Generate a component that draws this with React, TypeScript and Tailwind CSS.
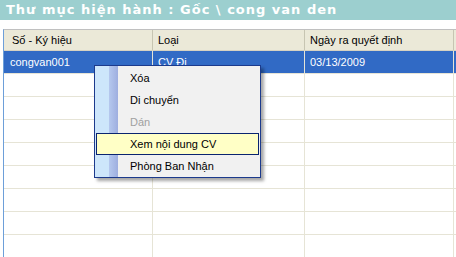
import React from 'react';

const rows = 9;

const menuItems = [
  { label: 'Xóa' },
  { label: 'Di chuyển' },
  { label: 'Dán', disabled: true },
  { label: 'Xem nội dung CV', active: true },
  { label: 'Phòng Ban Nhận' },
];

export default function App() {
  return (
    <div
      className="relative w-[456px] h-[257px] overflow-hidden bg-white text-[11px] text-black"
      style={{ fontFamily: '"Liberation Sans", Arial, sans-serif' }}
    >
      {/* Title bar */}
      <div
        className="h-[20px] bg-[#9ccfcf] flex items-center pl-[6px] text-white font-bold text-[13px] tracking-[1px]"
        style={{ fontFamily: '"DejaVu Sans", Verdana, sans-serif' }}
      >
        Thư mục hiện hành : Gốc \ cong van den
      </div>
      <div className="h-[9px]" />

      {/* Grid */}
      <div className="ml-[3px] border-l border-[#6d9fd9] border-t border-t-[#c0c0c0]">
        <div className="grid grid-cols-[149px_152px_149px] h-[21px] bg-[#ebe9d8] border-b border-[#d6d2c2]">
          <div className="flex items-center pl-[8px] border-r border-[#c7c5b2]">Số - Ký hiệu</div>
          <div className="flex items-center pl-[5px] border-r border-[#c7c5b2]">Loại</div>
          <div className="flex items-center pl-[5px] border-r border-[#c7c5b2]">Ngày ra quyết định</div>
        </div>

        <div className="grid grid-cols-[149px_152px_149px] h-[23px] bg-[#316ac5] text-white border-b border-[#e6e4d6]">
          <div className="flex items-center pl-[6px] border-r border-[#e6e4d6]">congvan001</div>
          <div className="flex items-center pl-[5px] border-r border-[#e6e4d6]">CV Đi</div>
          <div className="flex items-center pl-[5px] border-r border-[#e6e4d6]">03/13/2009</div>
        </div>

        {Array.from({ length: rows }).map((_, i) => (
          <div key={i} className="grid grid-cols-[149px_152px_149px] h-[23px] border-b border-[#e6e4d6]">
            <div className="border-r border-[#e6e4d6]" />
            <div className="border-r border-[#e6e4d6]" />
            <div className="border-r border-[#e6e4d6]" />
          </div>
        ))}
      </div>

      {/* Context menu */}
      <div className="absolute left-[94px] top-[65px] w-[167px] h-[113px] border border-[#1c3a8c] bg-[#f1f1f1] py-[1px] shadow-[3px_3px_3px_rgba(0,0,0,0.35)]">
        <div className="absolute left-0 top-0 bottom-0 w-[14px] bg-[#cde6fb]" />
        <div className="absolute left-[14px] top-0 bottom-0 w-[9px] bg-gradient-to-r from-[#b5c8ee] to-[#9eaedf]" />
        <div className="relative flex flex-col">
          {menuItems.map((item) => (
            <div
              key={item.label}
              className={
                item.active
                  ? 'h-[22px] mx-[1px] flex items-center pl-[33px] bg-[#ffffc6] border border-[#0a2470]'
                  : 'h-[22px] mx-[1px] flex items-center pl-[34px] ' + (item.disabled ? 'text-[#a0a0a0]' : '')
              }
            >
              {item.label}
            </div>
          ))}
        </div>
      </div>
    </div>
  );
}
